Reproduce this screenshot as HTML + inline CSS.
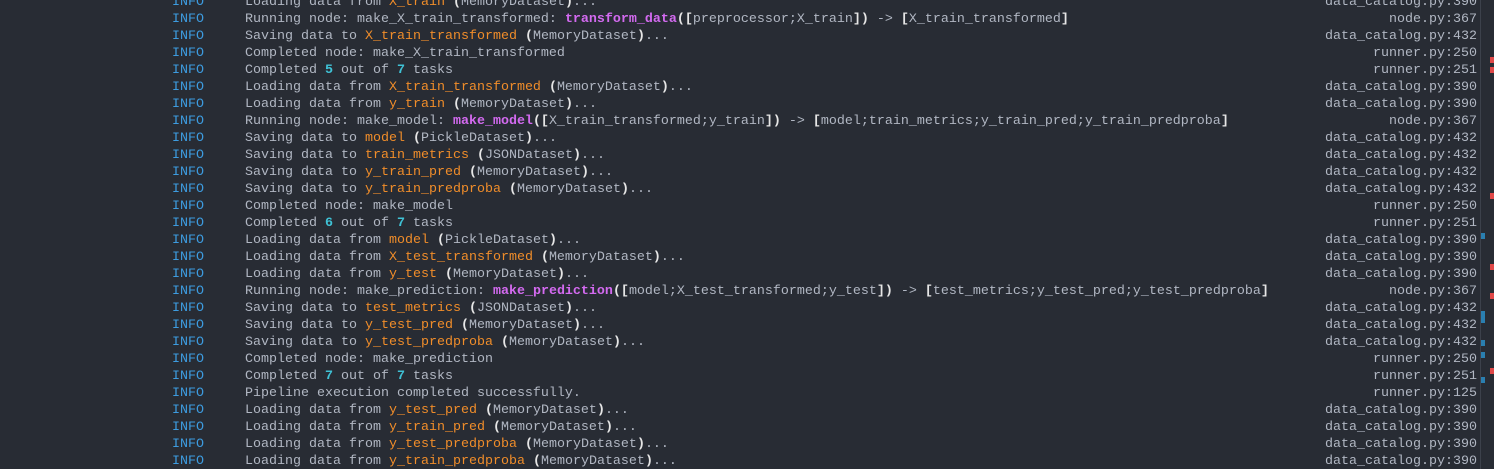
<!DOCTYPE html>
<html><head><meta charset="utf-8"><style>
html,body{margin:0;padding:0;background:#282c34;width:1494px;height:469px;overflow:hidden}
body{position:relative;font-family:"Liberation Mono",monospace;font-size:13.33px;color:#b1b7c3}
.r{position:absolute;left:0;width:1477px;height:17px;line-height:17px;white-space:pre}
.i{position:absolute;left:172px;color:#3d9ce0}
.m{position:absolute;left:245px}
.f{position:absolute;right:0}
.o{color:#f08d2a}
.p{color:#d36af0;font-weight:bold}
.n{color:#3fc2d6;font-weight:bold}
.b{color:#e6e6e6;font-weight:bold}
.vl{position:absolute;left:1480px;top:0;width:1px;height:469px;background:#3c414b}
.mk{position:absolute;width:4px;height:6px}
.rd{background:#e04848;left:1490px}
.bl{background:#2a7fb0;left:1481px}
</style></head><body>
<div class="r" style="top:-6px"><span class="i">INFO</span><span class="m">Loading data from <span class="o">X_train</span> <span class="b">(</span>MemoryDataset<span class="b">)</span>...</span><span class="f">data_catalog.py:390</span></div>
<div class="r" style="top:11px"><span class="i">INFO</span><span class="m">Running node: make_X_train_transformed: <span class="p">transform_data</span><span class="b">([</span>preprocessor;X_train<span class="b">])</span> -&gt; <span class="b">[</span>X_train_transformed<span class="b">]</span></span><span class="f">node.py:367</span></div>
<div class="r" style="top:28px"><span class="i">INFO</span><span class="m">Saving data to <span class="o">X_train_transformed</span> <span class="b">(</span>MemoryDataset<span class="b">)</span>...</span><span class="f">data_catalog.py:432</span></div>
<div class="r" style="top:45px"><span class="i">INFO</span><span class="m">Completed node: make_X_train_transformed</span><span class="f">runner.py:250</span></div>
<div class="r" style="top:62px"><span class="i">INFO</span><span class="m">Completed <span class="n">5</span> out of <span class="n">7</span> tasks</span><span class="f">runner.py:251</span></div>
<div class="r" style="top:79px"><span class="i">INFO</span><span class="m">Loading data from <span class="o">X_train_transformed</span> <span class="b">(</span>MemoryDataset<span class="b">)</span>...</span><span class="f">data_catalog.py:390</span></div>
<div class="r" style="top:96px"><span class="i">INFO</span><span class="m">Loading data from <span class="o">y_train</span> <span class="b">(</span>MemoryDataset<span class="b">)</span>...</span><span class="f">data_catalog.py:390</span></div>
<div class="r" style="top:113px"><span class="i">INFO</span><span class="m">Running node: make_model: <span class="p">make_model</span><span class="b">([</span>X_train_transformed;y_train<span class="b">])</span> -&gt; <span class="b">[</span>model;train_metrics;y_train_pred;y_train_predproba<span class="b">]</span></span><span class="f">node.py:367</span></div>
<div class="r" style="top:130px"><span class="i">INFO</span><span class="m">Saving data to <span class="o">model</span> <span class="b">(</span>PickleDataset<span class="b">)</span>...</span><span class="f">data_catalog.py:432</span></div>
<div class="r" style="top:147px"><span class="i">INFO</span><span class="m">Saving data to <span class="o">train_metrics</span> <span class="b">(</span>JSONDataset<span class="b">)</span>...</span><span class="f">data_catalog.py:432</span></div>
<div class="r" style="top:164px"><span class="i">INFO</span><span class="m">Saving data to <span class="o">y_train_pred</span> <span class="b">(</span>MemoryDataset<span class="b">)</span>...</span><span class="f">data_catalog.py:432</span></div>
<div class="r" style="top:181px"><span class="i">INFO</span><span class="m">Saving data to <span class="o">y_train_predproba</span> <span class="b">(</span>MemoryDataset<span class="b">)</span>...</span><span class="f">data_catalog.py:432</span></div>
<div class="r" style="top:198px"><span class="i">INFO</span><span class="m">Completed node: make_model</span><span class="f">runner.py:250</span></div>
<div class="r" style="top:215px"><span class="i">INFO</span><span class="m">Completed <span class="n">6</span> out of <span class="n">7</span> tasks</span><span class="f">runner.py:251</span></div>
<div class="r" style="top:232px"><span class="i">INFO</span><span class="m">Loading data from <span class="o">model</span> <span class="b">(</span>PickleDataset<span class="b">)</span>...</span><span class="f">data_catalog.py:390</span></div>
<div class="r" style="top:249px"><span class="i">INFO</span><span class="m">Loading data from <span class="o">X_test_transformed</span> <span class="b">(</span>MemoryDataset<span class="b">)</span>...</span><span class="f">data_catalog.py:390</span></div>
<div class="r" style="top:266px"><span class="i">INFO</span><span class="m">Loading data from <span class="o">y_test</span> <span class="b">(</span>MemoryDataset<span class="b">)</span>...</span><span class="f">data_catalog.py:390</span></div>
<div class="r" style="top:283px"><span class="i">INFO</span><span class="m">Running node: make_prediction: <span class="p">make_prediction</span><span class="b">([</span>model;X_test_transformed;y_test<span class="b">])</span> -&gt; <span class="b">[</span>test_metrics;y_test_pred;y_test_predproba<span class="b">]</span></span><span class="f">node.py:367</span></div>
<div class="r" style="top:300px"><span class="i">INFO</span><span class="m">Saving data to <span class="o">test_metrics</span> <span class="b">(</span>JSONDataset<span class="b">)</span>...</span><span class="f">data_catalog.py:432</span></div>
<div class="r" style="top:317px"><span class="i">INFO</span><span class="m">Saving data to <span class="o">y_test_pred</span> <span class="b">(</span>MemoryDataset<span class="b">)</span>...</span><span class="f">data_catalog.py:432</span></div>
<div class="r" style="top:334px"><span class="i">INFO</span><span class="m">Saving data to <span class="o">y_test_predproba</span> <span class="b">(</span>MemoryDataset<span class="b">)</span>...</span><span class="f">data_catalog.py:432</span></div>
<div class="r" style="top:351px"><span class="i">INFO</span><span class="m">Completed node: make_prediction</span><span class="f">runner.py:250</span></div>
<div class="r" style="top:368px"><span class="i">INFO</span><span class="m">Completed <span class="n">7</span> out of <span class="n">7</span> tasks</span><span class="f">runner.py:251</span></div>
<div class="r" style="top:385px"><span class="i">INFO</span><span class="m">Pipeline execution completed successfully.</span><span class="f">runner.py:125</span></div>
<div class="r" style="top:402px"><span class="i">INFO</span><span class="m">Loading data from <span class="o">y_test_pred</span> <span class="b">(</span>MemoryDataset<span class="b">)</span>...</span><span class="f">data_catalog.py:390</span></div>
<div class="r" style="top:419px"><span class="i">INFO</span><span class="m">Loading data from <span class="o">y_train_pred</span> <span class="b">(</span>MemoryDataset<span class="b">)</span>...</span><span class="f">data_catalog.py:390</span></div>
<div class="r" style="top:436px"><span class="i">INFO</span><span class="m">Loading data from <span class="o">y_test_predproba</span> <span class="b">(</span>MemoryDataset<span class="b">)</span>...</span><span class="f">data_catalog.py:390</span></div>
<div class="r" style="top:453px"><span class="i">INFO</span><span class="m">Loading data from <span class="o">y_train_predproba</span> <span class="b">(</span>MemoryDataset<span class="b">)</span>...</span><span class="f">data_catalog.py:390</span></div>
<div class="vl"></div>
<div class="mk rd" style="top:57px"></div>
<div class="mk rd" style="top:67px"></div>
<div class="mk rd" style="top:193px"></div>
<div class="mk rd" style="top:264px"></div>
<div class="mk rd" style="top:293px"></div>
<div class="mk rd" style="top:368px"></div>
<div class="mk bl" style="top:233px"></div>
<div class="mk bl" style="top:311px;height:12px"></div>
<div class="mk bl" style="top:340px"></div>
<div class="mk bl" style="top:352px"></div>
<div class="mk bl" style="top:377px"></div>
</body></html>
